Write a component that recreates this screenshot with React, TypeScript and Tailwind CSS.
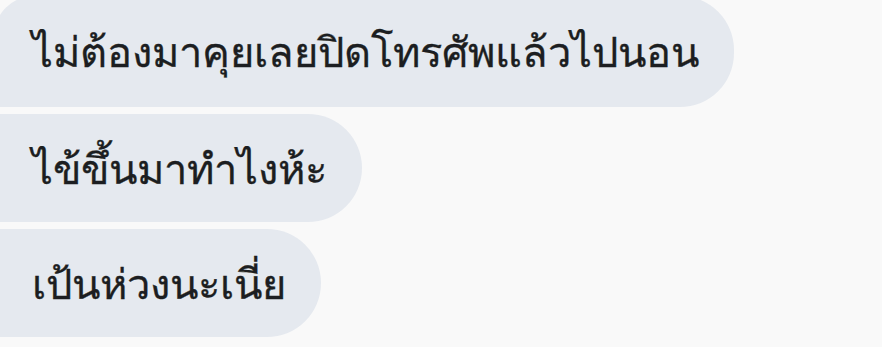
const messages = [
  { text: "ไม่ต้องมาคุยเลยปิดโทรศัพแล้วไปนอน", first: true },
  { text: "ไข้ขึ้นมาทำไงห้ะ", first: false },
  { text: "เป้นห่วงนะเนี่ย", first: false },
];

export default function App() {
  return (
    <div className="w-[882px] h-[347px] overflow-hidden bg-[#f9f9f9] font-['Noto_Sans',sans-serif]">
      <div className="flex flex-col items-start gap-[7px] -mt-[4px] -ml-[6px]">
        {messages.map((m, i) => (
          <div
            key={i}
            className={`flex items-center pl-[38px] pr-[35px] bg-[#e5e9ef] text-[#1c1e21] text-[41.7px] [-webkit-text-stroke:0.3px_#1c1e21] rounded-r-[54px] ${
              m.first ? "rounded-tl-[40px] h-[111px]" : "h-[108px]"
            }`}
          >
            {m.text}
          </div>
        ))}
      </div>
    </div>
  );
}
